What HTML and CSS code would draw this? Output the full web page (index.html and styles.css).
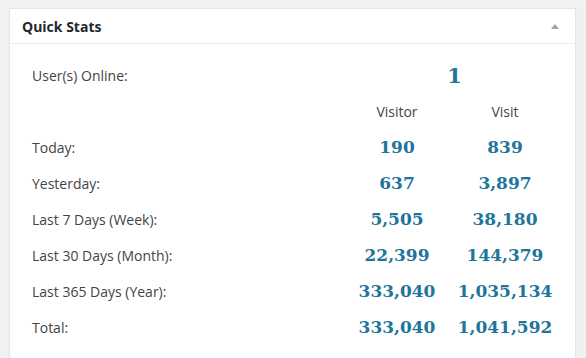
FILE: index.html
```
<!DOCTYPE html>
<html>
<head>
<meta charset="utf-8">
<link rel="stylesheet" href="styles.css">
</head>
<body>
<div class="panel">
  <div class="panel-head">
    <h2 class="title">Quick Stats</h2>
    <span class="toggle"></span>
  </div>
  <div class="panel-body">
    <div class="row">
      <div class="label">User(s) Online:</div>
      <div class="num big span2">1</div>
    </div>
    <div class="row">
      <div class="label"></div>
      <div class="colhead">Visitor</div>
      <div class="colhead">Visit</div>
    </div>
    <div class="row">
      <div class="label">Today:</div>
      <div class="num">190</div>
      <div class="num">839</div>
    </div>
    <div class="row">
      <div class="label">Yesterday:</div>
      <div class="num">637</div>
      <div class="num">3,897</div>
    </div>
    <div class="row">
      <div class="label">Last 7 Days (Week):</div>
      <div class="num">5,505</div>
      <div class="num">38,180</div>
    </div>
    <div class="row">
      <div class="label">Last 30 Days (Month):</div>
      <div class="num">22,399</div>
      <div class="num">144,379</div>
    </div>
    <div class="row">
      <div class="label">Last 365 Days (Year):</div>
      <div class="num">333,040</div>
      <div class="num">1,035,134</div>
    </div>
    <div class="row">
      <div class="label">Total:</div>
      <div class="num">333,040</div>
      <div class="num">1,041,592</div>
    </div>
  </div>
</div>
</body>
</html>
```
FILE: styles.css
```
html, body {
  margin: 0;
  padding: 0;
  background: #f1f1f1;
}
body {
  padding: 8px 10px 0 9px;
  font-family: "Open Sans", "Liberation Sans", sans-serif;
  color: #444;
}
.panel {
  background: #fff;
  border: 1px solid #e5e5e5;
  box-shadow: 0 1px 1px rgba(0,0,0,0.04);
}
.panel-head {
  height: 34px;
  border-bottom: 1px solid #eee;
  display: flex;
  align-items: center;
  justify-content: space-between;
  padding: 0 16px 0 12px;
}
.title {
  margin: 0;
  font-size: 14px;
  font-weight: 700;
  color: #23282d;
}
.toggle {
  width: 0;
  height: 0;
  border-left: 4px solid transparent;
  border-right: 4px solid transparent;
  border-bottom: 5px solid #a0a5aa;
  margin-top: 1px;
}
.panel-body {
  padding: 13px 16px 14px 22px;
}
.row {
  display: grid;
  grid-template-columns: 1fr 108px 108px;
  height: 36px;
  align-items: center;
}
.label {
  font-size: 14px;
}
.colhead {
  text-align: center;
  font-size: 14px;
}
.num {
  text-align: center;
  font-family: "DejaVu Serif", "Liberation Serif", serif;
  font-weight: 700;
  font-size: 17px;
  color: #21759b;
}
.big {
  font-size: 21px;
  padding-left: 7px;
}
.span2 {
  grid-column: 2 / 4;
}
```
